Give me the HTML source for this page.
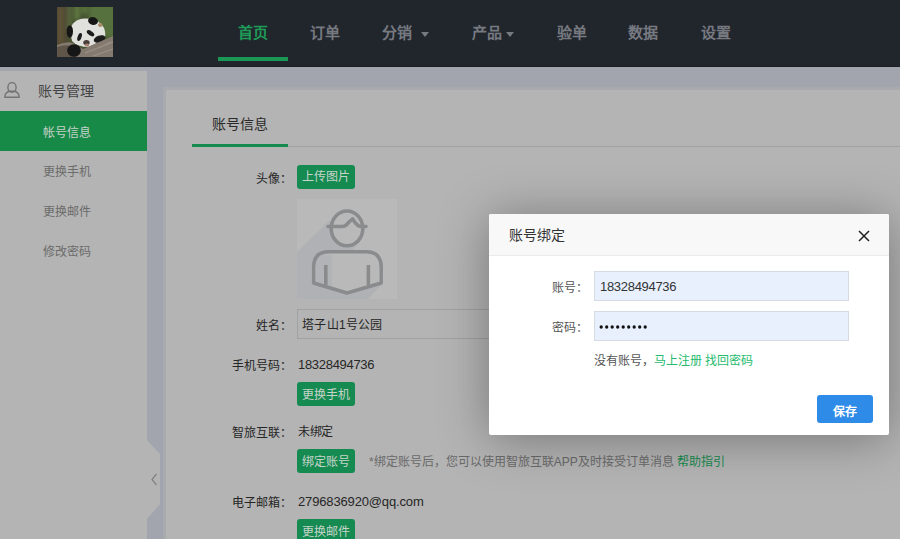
<!DOCTYPE html>
<html lang="zh-CN"><head><meta charset="utf-8">
<style>
*{margin:0;padding:0;box-sizing:border-box}
html,body{width:900px;height:539px;overflow:hidden}
body{position:relative;background:#a2a5ad;font-family:"Liberation Sans",sans-serif;color:#1e1e1e}
.a{position:absolute;white-space:nowrap}
#hdr{left:0;top:0;width:900px;height:67px;background:#21252c;border-bottom:1px solid #1b1f25}
.nav{font-size:15px;font-weight:bold;color:#767980;top:24px;line-height:18px}
.caret{width:0;height:0;border-left:4px solid transparent;border-right:4px solid transparent;border-top:5px solid #767980}
#side{left:0;top:71px;width:147px;height:468px;background:#b4b4b4}
.si{font-size:12px;color:#6b6b6b;left:43px;line-height:16px}
#panel{left:163px;top:87px;width:737px;height:452px;background:#b4b4b4;border:3px solid #a9aaae;border-right:none;border-bottom:none}
.lbl{font-size:12px;color:#262626;line-height:16px}
.btn{background:#158a51;color:#c6d4ca;font-size:12px;border-radius:3px;width:58px;height:24px;line-height:26px;text-align:center;left:297px}
.val{font-size:13px;color:#262626;line-height:16px;left:298px;letter-spacing:-0.3px}
#mask{left:0;top:0;width:900px;height:539px}
#modal{left:489px;top:214px;width:400px;height:221px;background:#fff;border-radius:2px;box-shadow:0 4px 50px rgba(0,0,0,.35);overflow:hidden}
</style></head><body>

<div class="a" id="hdr">
  <svg class="a" style="left:57px;top:7px" width="56" height="50" viewBox="0 0 56 50">
    <defs>
      <filter id="b2" x="-30%" y="-30%" width="160%" height="160%"><feGaussianBlur stdDeviation="2.2"/></filter>
      <filter id="b1" x="-20%" y="-20%" width="140%" height="140%"><feGaussianBlur stdDeviation="0.6"/></filter>
      <clipPath id="cp"><rect width="56" height="50"/></clipPath>
    </defs>
    <g clip-path="url(#cp)">
    <rect width="56" height="50" fill="#44512f"/>
    <g filter="url(#b2)">
      <rect x="-5" y="-5" width="16" height="50" fill="#4e4a32"/>
      <rect x="32" y="-5" width="30" height="36" fill="#56713c"/>
      <rect x="2" y="0" width="3" height="38" fill="#6a5a3e"/>
      <rect x="11" y="-2" width="3" height="26" fill="#5e7042"/>
      <rect x="18" y="-3" width="4" height="16" fill="#6a8646"/>
      <rect x="25" y="-3" width="5" height="10" fill="#5c773d"/>
    </g>
    <g filter="url(#b1)">
      <path d="M13 24 Q15 12 28 11.5 Q42 11 47 21 Q50 28 46 33 L32 40 Q20 40 15 34 Z" fill="#e0e0dc"/>
      <ellipse cx="12.8" cy="24.5" rx="3.2" ry="6.2" fill="#141414"/>
      <ellipse cx="36" cy="14" rx="5" ry="3.8" fill="#151515" transform="rotate(15 36 14)"/>
      <ellipse cx="43.3" cy="18" rx="2.3" ry="2" fill="#a88a68"/>
      <ellipse cx="22.6" cy="30" rx="2" ry="4.2" fill="#1a1a1a" transform="rotate(18 22.6 30)"/>
      <ellipse cx="33.5" cy="26.2" rx="4.3" ry="2.2" fill="#1c1c1c" transform="rotate(35 33.5 26.2)"/>
      <ellipse cx="29.5" cy="35.5" rx="3.2" ry="2.6" fill="#4a3e3a"/>
      <ellipse cx="30" cy="38" rx="2.2" ry="1.5" fill="#a88070"/>
      <ellipse cx="42.5" cy="32" rx="6" ry="3.4" fill="#1a1a1a" transform="rotate(-20 42.5 32)"/>
      <path d="M0 38 Q10 34 16 36 L26 42 L56 29 L56 50 L0 50 Z" fill="#857a70"/>
      <path d="M0 40 Q8 37 14 39 L20 50 L0 50 Z" fill="#5e544a"/>
      <path d="M28 46 L56 35 M36 49 L56 42 M42 41 L54 35" stroke="#9d9184" stroke-width="1.3"/>
      <ellipse cx="17" cy="43.5" rx="6.8" ry="6.2" fill="#121212"/>
    </g>
    </g>
  </svg>
  <div class="a nav" style="left:238px;color:#1f9b58">首页</div>
  <div class="a" style="left:218px;top:57px;width:70px;height:4px;background:#1c9856"></div>
  <div class="a nav" style="left:310px">订单</div>
  <div class="a nav" style="left:382px">分销</div>
  <div class="a caret" style="left:421px;top:32px"></div>
  <div class="a nav" style="left:472px">产品</div>
  <div class="a caret" style="left:506px;top:32px"></div>
  <div class="a nav" style="left:557px">验单</div>
  <div class="a nav" style="left:628px">数据</div>
  <div class="a nav" style="left:701px">设置</div>
</div>

<div class="a" id="side">
  <svg class="a" style="left:4px;top:11px" width="16" height="16" viewBox="0 0 16 16">
    <ellipse cx="8" cy="5.4" rx="4.1" ry="4.8" fill="none" stroke="#747474" stroke-width="1.4"/>
    <path d="M0.8 15.2 C1 11.5 3.5 9.6 5.5 9.2 L10.5 9.2 C12.5 9.6 15 11.5 15.2 15.2 Z" fill="none" stroke="#747474" stroke-width="1.4" stroke-linejoin="round"/>
  </svg>
  <div class="a" style="left:38px;top:11px;font-size:14px;line-height:18px;color:#444">账号管理</div>
  <div class="a" style="left:0;top:40px;width:147px;height:40px;background:#178a48"></div>
  <div class="a si" style="top:54px;color:#c5d1c9">帐号信息</div>
  <div class="a si" style="top:93px">更换手机</div>
  <div class="a si" style="top:133px">更换邮件</div>
  <div class="a si" style="top:173px">修改密码</div>
</div>
<svg class="a" style="left:147px;top:440px" width="14" height="80" viewBox="0 0 14 80">
  <path d="M0 0 L13 14 L13 64 L0 79 Z" fill="#b4b4b4"/>
  <path d="M9.5 34 L5 39.5 L9.5 45" fill="none" stroke="#808080" stroke-width="1.2"/>
</svg>

<div class="a" id="panel">
  <div class="a" style="left:46px;top:25px;font-size:14px;line-height:18px;color:#2a2a2a">账号信息</div>
  <div class="a" style="left:26px;top:56px;width:711px;height:1px;background:#a0a2a5"></div>
  <div class="a" style="left:26px;top:54px;width:96px;height:3px;background:#178a4f"></div>
</div>

<div class="a lbl" style="left:256px;top:171px">头像：</div>
<div class="a btn" style="top:165px;line-height:24px">上传图片</div>
<svg class="a" style="left:297px;top:199px" width="100" height="100" viewBox="0 0 100 100">
  <rect width="100" height="100" fill="#b9b9b9"/>
  <path d="M32 22 L0 53 L0 100 L71 100 L86 84 L86 62 L56 50 L64 40 L67 24 Z" fill="#afb1b4"/>
  <ellipse cx="50" cy="29.4" rx="15.8" ry="17.4" fill="#b9b9b9"/>
  <path d="M16.6 84 L16.6 68 Q16.6 52.8 32 52.8 L69 52.8 Q84 52.8 84 68 L84 84 L50 94 Z" fill="#b9b9b9"/>
  <path d="M18 56 L35 56 L35 90 L18 85 Z" fill="#b2b3b6"/>
  <path d="M36 33 Q37 43 45 47 L38 46 Q35 41 35 33 Z" fill="#b2b3b6"/>
  <ellipse cx="50" cy="29.4" rx="15.8" ry="17.4" fill="none" stroke="#8a8b8d" stroke-width="3.6"/>
  <path d="M31 27.5 L45 27.5 Q49 27.5 52 23 L55.6 19.8 Q58 24 61 26.5 Q62.5 27.5 65 27.5 L69 27.5" fill="none" stroke="#8a8b8d" stroke-width="3.6" stroke-linejoin="round" stroke-linecap="round"/>
  <path d="M16.6 84 L16.6 68 Q16.6 52.8 32 52.8 L69 52.8 Q84.2 52.8 84.2 68 L84.2 84 L50 94 Z" fill="none" stroke="#8a8b8d" stroke-width="3.4" stroke-linejoin="round"/>
  <path d="M28.8 65.9 L28.8 86 M71.4 65.9 L71.4 86" stroke="#8a8b8d" stroke-width="3.6"/>
</svg>

<div class="a lbl" style="left:256px;top:318px">姓名：</div>
<div class="a" style="left:297px;top:309px;width:300px;height:30px;border:1px solid #9fa1a4;background:#b4b4b4"></div>
<div class="a val" style="left:302px;top:317px;font-size:12px;letter-spacing:0.3px">塔子山1号公园</div>

<div class="a lbl" style="left:232px;top:358px">手机号码：</div>
<div class="a val" style="top:357px">18328494736</div>
<div class="a btn" style="top:382px">更换手机</div>

<div class="a lbl" style="left:232px;top:425px">智旅互联：</div>
<div class="a val" style="top:424px;font-size:12px">未绑定</div>
<div class="a btn" style="top:449px">绑定账号</div>
<div class="a" style="left:369px;top:454px;font-size:12px;line-height:16px;color:#6a6a6a">*绑定账号后，您可以使用智旅互联APP及时接受订单消息 <span style="color:#178a4f">帮助指引</span></div>

<div class="a lbl" style="left:232px;top:495px">电子邮箱：</div>
<div class="a val" style="top:494px;letter-spacing:-0.15px">2796836920@qq.com</div>
<div class="a btn" style="top:519px">更换邮件</div>

<div class="a" id="modal">
  <div class="a" style="left:0;top:0;width:400px;height:42px;background:#f8f8f8;border-bottom:1px solid #ebebeb"></div>
  <div class="a" style="left:20px;top:12px;font-size:14px;line-height:18px;color:#333">账号绑定</div>
  <svg class="a" style="left:369px;top:16px" width="12" height="12" viewBox="0 0 12 12">
    <path d="M1 1 L11 11 M11 1 L1 11" stroke="#222" stroke-width="1.5"/>
  </svg>
  <div class="a" style="left:63px;top:66px;font-size:12px;line-height:16px;color:#555">账号：</div>
  <div class="a" style="left:105px;top:57px;width:255px;height:30px;background:#e8f0fe;border:1px solid #d6dbe3"></div>
  <div class="a" style="left:111px;top:65px;font-size:13px;line-height:16px;color:#333;letter-spacing:-0.3px">18328494736</div>
  <div class="a" style="left:63px;top:106px;font-size:12px;line-height:16px;color:#555">密码：</div>
  <div class="a" style="left:105px;top:97px;width:255px;height:30px;background:#e8f0fe;border:1px solid #d6dbe3"></div>
  <svg class="a" style="left:110px;top:110px" width="50" height="6" viewBox="0 0 50 6"><circle cx="2.2" cy="3" r="1.65" fill="#111"/><circle cx="7.7" cy="3" r="1.65" fill="#111"/><circle cx="13.2" cy="3" r="1.65" fill="#111"/><circle cx="18.7" cy="3" r="1.65" fill="#111"/><circle cx="24.2" cy="3" r="1.65" fill="#111"/><circle cx="29.7" cy="3" r="1.65" fill="#111"/><circle cx="35.2" cy="3" r="1.65" fill="#111"/><circle cx="40.7" cy="3" r="1.65" fill="#111"/><circle cx="46.2" cy="3" r="1.65" fill="#111"/></svg>
  <div class="a" style="left:105px;top:139px;font-size:12px;line-height:16px;color:#555">没有账号，<span style="color:#24bb6d">马上注册 找回密码</span></div>
  <div class="a" style="left:328px;top:181px;width:56px;height:28px;border-radius:3px;background:#2e8ce8;color:#fff;font-size:12px;font-weight:bold;line-height:28px;text-align:center;padding-top:3px">保存</div>
</div>

</body></html>
